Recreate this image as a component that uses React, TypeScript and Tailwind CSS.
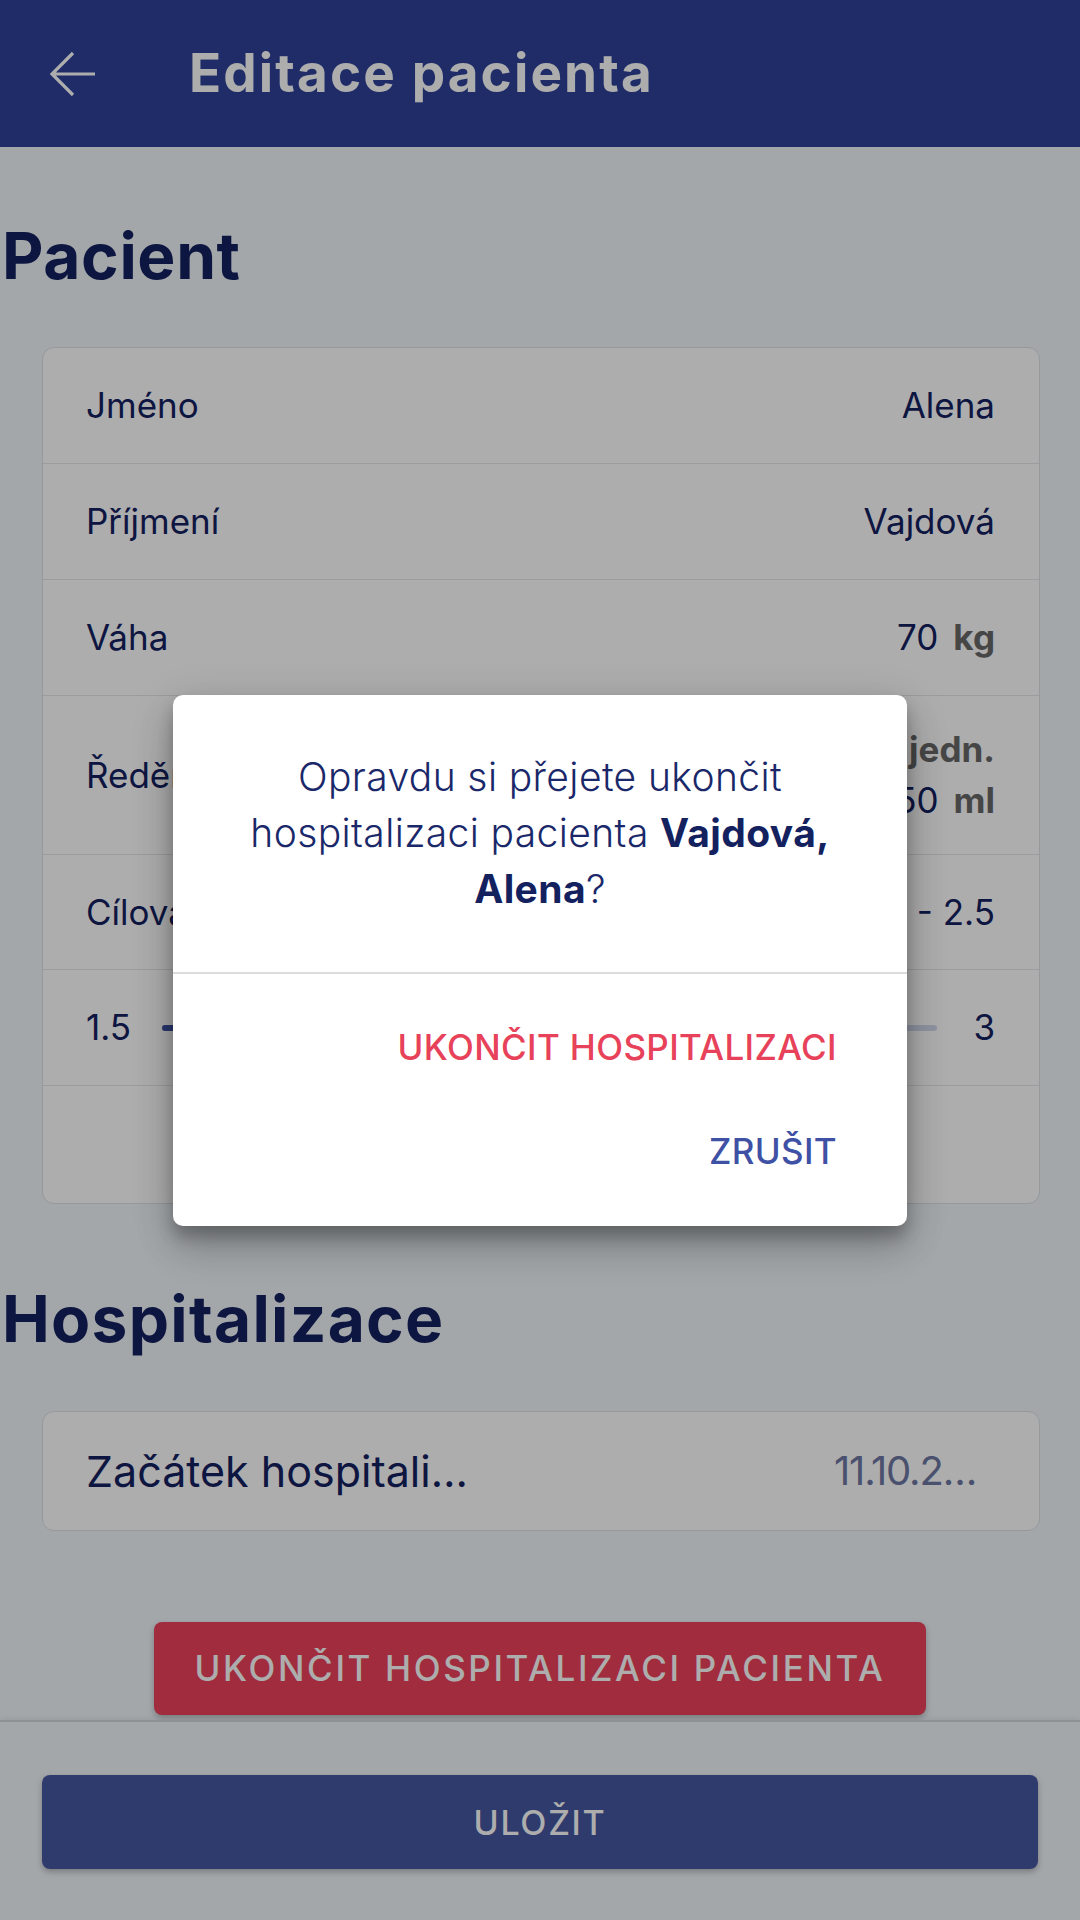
type Row = {
  label: string;
  value: string;
  unit?: string;
};

const patientRows: Row[] = [
  { label: 'Jméno', value: 'Alena' },
  { label: 'Příjmení', value: 'Vajdová' },
  { label: 'Váha', value: '70', unit: 'kg' },
];

const InfoRow = ({ row }: { row: Row }) => (
  <div className="flex h-[116px] items-center justify-between border-b border-[#e3e6ea] pl-[43px] pr-[44px]">
    <span>{row.label}</span>
    <span className="flex items-baseline">
      {row.value}
      {row.unit && <b className="ml-[15px] font-bold text-[#686868]">{row.unit}</b>}
    </span>
  </div>
);

export default function App() {
  return (
    <div className="relative h-[1920px] w-[1080px] overflow-hidden bg-[#F1F6FB] font-['Inter',sans-serif] text-[#14215F]">
      <div className="flex h-full flex-col">
        <header className="flex h-[147px] shrink-0 items-center bg-[#2E4299] text-white">
          <svg
            className="ml-[48px] h-[48px] w-[48px]"
            viewBox="0 0 48 48"
            fill="none"
            stroke="currentColor"
            strokeWidth="3.2"
          >
            <path d="M47 24H4M25 3L4 24l21 21" />
          </svg>
          <h1 className="ml-[93px] text-[53px] font-bold tracking-[0.04em]">Editace pacienta</h1>
        </header>

        <main className="flex-1 overflow-hidden">
          <div className="flex h-[200px] items-center pl-[2px] pt-[18px]">
            <h2 className="text-[64px] font-bold leading-none tracking-[0.01em]">Pacient</h2>
          </div>

          <section className="ml-[42px] mr-[40px] overflow-hidden rounded-[12px] border border-[#dde1e6] bg-white text-[35px]">
            {patientRows.map((row) => (
              <InfoRow key={row.label} row={row} />
            ))}
            <div className="flex h-[159px] items-center justify-between border-b border-[#e3e6ea] pl-[43px] pr-[44px]">
              <span>Ředění</span>
              <div className="flex flex-col items-end leading-[51px]">
                <span>
                  1<b className="ml-[15px] font-bold text-[#686868]">jedn.</b>
                </span>
                <span>
                  50<b className="ml-[15px] font-bold text-[#686868]">ml</b>
                </span>
              </div>
            </div>
            <div className="flex h-[115px] items-center justify-between border-b border-[#e3e6ea] pl-[43px] pr-[44px]">
              <span>Cílová glykémie</span>
              <span>1.5 - 2.5</span>
            </div>
            <div className="flex h-[116px] items-center border-b border-[#e3e6ea] pl-[43px] pr-[44px]">
              <span>1.5</span>
              <div className="relative ml-[31px] mr-[36px] h-[6px] flex-1 rounded-full bg-[#d3d9ee]">
                <div className="h-full w-[60%] rounded-full bg-[#3F51A5]" />
                <div className="absolute left-[60%] top-1/2 h-[26px] w-[26px] -translate-x-1/2 -translate-y-1/2 rounded-full bg-[#3F51A5]" />
              </div>
              <span>3</span>
            </div>
            <div className="h-[117px]" />
          </section>

          <div className="flex h-[207px] items-center pl-[2px] pt-[23px]">
            <h2 className="text-[64px] font-bold leading-none tracking-[0.02em]">Hospitalizace</h2>
          </div>

          <section className="ml-[42px] mr-[40px] flex h-[120px] items-center justify-between rounded-[12px] border border-[#dde1e6] bg-white pl-[43px] pr-[63px] text-[43px]">
            <span>Začátek hospitali…</span>
            <span className="text-[40px] tracking-[-0.03em] text-[#6E78A2]">11.10.2…</span>
          </section>

          <button className="mx-auto mt-[91px] flex h-[93px] w-[772px] items-center justify-center rounded-[8px] bg-[#EC425A] text-[35px] font-medium tracking-[0.075em] text-white shadow-[0_3px_6px_rgba(0,0,0,0.25)]">
            UKONČIT HOSPITALIZACI PACIENTA
          </button>
        </main>

        <footer className="h-[200px] shrink-0 border-t-[2px] border-[#d0d5db] px-[42px] pt-[53px] shadow-[0_-2px_5px_rgba(0,0,0,0.06)]">
          <button className="flex h-[94px] w-full items-center justify-center rounded-[8px] bg-[#4457A0] text-[34px] font-medium tracking-[0.05em] text-white shadow-[0_3px_6px_rgba(0,0,0,0.25)]">
            ULOŽIT
          </button>
        </footer>
      </div>

      <div className="absolute inset-0 flex items-center justify-center bg-black/[0.32]">
        <div className="w-[734px] overflow-hidden rounded-[10px] bg-white shadow-[0_24px_38px_rgba(0,0,0,0.16),0_9px_46px_rgba(0,0,0,0.14),0_11px_15px_rgba(0,0,0,0.22)]">
          <div className="flex h-[277px] items-center justify-center px-[30px] text-center text-[39px] font-light leading-[56px] tracking-[0.01em] text-[#1A286A]">
            <p>
              Opravdu si přejete ukončit
              <br />
              hospitalizaci pacienta <b className="font-bold text-[#14215F]">Vajdová,</b>
              <br />
              <b className="font-bold text-[#14215F]">Alena</b>?
            </p>
          </div>
          <div className="h-[2px] bg-[#dcdcdc]" />
          <div className="flex flex-col items-end py-[22px] pr-[70px] text-[35px] font-medium tracking-[0.01em]">
            <button className="h-[104px] text-[#E8415A]">UKONČIT HOSPITALIZACI</button>
            <button className="h-[104px] text-[#3F51A5]">ZRUŠIT</button>
          </div>
        </div>
      </div>
    </div>
  );
}
